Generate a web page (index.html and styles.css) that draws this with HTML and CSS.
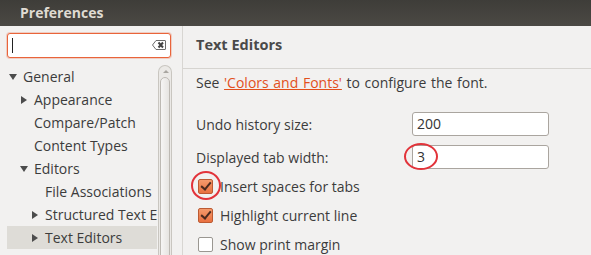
FILE: index.html
```html
<!DOCTYPE html>
<html>
<head>
<meta charset="utf-8">
<link rel="stylesheet" href="styles.css">
</head>
<body>
<div class="window">
  <div class="titlebar">Preferences</div>
  <div class="content">
    <div class="left">
      <div class="search">
        <span class="caret"></span>
        <svg class="clear" width="14" height="10" viewBox="0 0 14 10">
          <path d="M4 0.5 H13 a0.5 0.5 0 0 1 0.5 0.5 V9 a0.5 0.5 0 0 1 -0.5 0.5 H4 L0.5 5 Z" fill="#fff" stroke="#6b6b6b" stroke-width="1"/>
          <path d="M6.5 2.5 L11 7.5 M11 2.5 L6.5 7.5" stroke="#444" stroke-width="2"/>
        </svg>
      </div>
      <div class="treewrap">
        <ul class="tree">
          <li class="row lvl0"><span class="tw open"></span>General</li>
          <li class="row lvl1"><span class="tw closed"></span>Appearance</li>
          <li class="row lvl1"><span class="tw"></span>Compare/Patch</li>
          <li class="row lvl1"><span class="tw"></span>Content Types</li>
          <li class="row lvl1"><span class="tw open"></span>Editors</li>
          <li class="row lvl2"><span class="tw"></span>File Associations</li>
          <li class="row lvl2"><span class="tw closed"></span>Structured Text Editors</li>
          <li class="row lvl2 sel"><span class="tw closed"></span>Text Editors</li>
        </ul>
        <div class="scrollbar">
          <div class="sb-up"></div>
          <div class="sb-thumb"></div>
        </div>
      </div>
    </div>
    <div class="divider"></div>
    <div class="right">
      <div class="heading">Text Editors</div>
      <div class="page">
        <div class="info">See <a class="link">'Colors and Fonts'</a> to configure the font.</div>
        <div class="field first"><span class="label">Undo history size:</span><div class="input">200</div></div>
        <div class="field"><span class="label">Displayed tab width:</span><div class="input"><span class="ring ring-val"></span>3</div></div>
        <div class="check first"><span class="box on"><span class="ring ring-box"></span></span>Insert spaces for tabs</div>
        <div class="check"><span class="box on"></span>Highlight current line</div>
        <div class="check"><span class="box"></span>Show print margin</div>
      </div>
    </div>
  </div>
</div>
</body>
</html>
```
FILE: styles.css
```css
* { box-sizing: border-box; }
html, body { margin: 0; padding: 0; }
body {
  width: 591px;
  height: 255px;
  overflow: hidden;
  background: #f2f1f0;
  font-family: "Open Sans", "Noto Sans", sans-serif;
  font-size: 14px;
  color: #3c3c3c;
}
.window { display: flex; flex-direction: column; height: 255px; overflow: hidden; }
.titlebar {
  height: 26px;
  background: linear-gradient(#3e3d39, #4b4944);
  color: #dfdbd2;
  font-weight: bold;
  font-size: 14px;
  padding-left: 20px;
  line-height: 25px;
  flex: none;
}
.content { flex: 1; display: flex; min-height: 0; }
.left { width: 181px; padding: 7px 0 0 7px; display: flex; flex-direction: column; }
.search {
  position: relative;
  width: 164px;
  height: 25px;
  flex: none;
  border: 1px solid #e9643a;
  border-radius: 3px;
  background: #fff;
  box-shadow: 0 0 0 1px rgba(233,100,58,0.25);
}
.caret { position: absolute; left: 4px; top: 4px; width: 1px; height: 15px; background: #222; }
.clear { position: absolute; right: 4px; top: 6px; }
.treewrap { flex: 1; display: flex; margin-top: 7px; min-height: 0; }
.tree { list-style: none; margin: 0; padding: 0; width: 150px; overflow: hidden; white-space: nowrap; }
.row { height: 23px; line-height: 23px; display: flex; align-items: center; }
.lvl0 { padding-left: 0; }
.lvl1 { padding-left: 11px; }
.lvl2 { padding-left: 22px; }
.sel { background: #dedcd7; }
.tw { width: 16px; height: 23px; flex: none; position: relative; }
.tw.open::before {
  content: ""; position: absolute; left: 2px; top: 9px;
  border-left: 4px solid transparent; border-right: 4px solid transparent; border-top: 6px solid #4c4c4c;
}
.tw.closed::before {
  content: ""; position: absolute; left: 3px; top: 8px;
  border-top: 4px solid transparent; border-bottom: 4px solid transparent; border-left: 6px solid #4c4c4c;
}
.scrollbar {
  width: 14px; margin-left: 1px;
  border: 1px solid #c9c6c0; border-bottom: none;
  border-radius: 7px 7px 0 0;
  background: #ebe9e6;
  padding: 1px;
  overflow: hidden;
}
.sb-up { height: 10px; position: relative; }
.sb-up::before {
  content: ""; position: absolute; left: 3px; top: 3px;
  border-left: 3px solid transparent; border-right: 3px solid transparent; border-bottom: 3px solid #a9a6a0;
}
.sb-thumb {
  height: 200px; border: 1px solid #bdb9b3; border-radius: 6px 6px 0 0;
  background: linear-gradient(90deg, #f6f5f4, #e6e4e1);
}
.divider { width: 1px; background: #d8d6d2; margin-left: 1px; }
.right { flex: 1; display: flex; flex-direction: column; }
.heading {
  height: 43px; line-height: 37px; padding-left: 13px;
  font-weight: bold; color: #4a4a4a; font-size: 14.5px;
  border-bottom: 1px solid #d6d4d0;
}
.page { padding-left: 13px; }
.info { margin-top: 4px; height: 20px; line-height: 20px; word-spacing: 1px; }
.link { color: #e2501c; text-decoration: underline; text-decoration-color: #e2501c; }
.field { display: flex; align-items: center; height: 24px; margin-top: 9px; }
.field.first { margin-top: 19px; }
.label { width: 216px; }
.input {
  position: relative;
  width: 137px; height: 24px;
  border: 1px solid #aaa59f; border-radius: 3px;
  background: #fff; padding-left: 4px; line-height: 22px; color: #333;
}
.check { display: flex; align-items: center; height: 20px; margin-top: 9px; position: relative; }
.check.first { margin-top: 7px; }
.box {
  position: relative;
  width: 15px; height: 15px; margin: 0 7px 0 2px;
  border: 1px solid #9a9791; border-radius: 2px; background: #fff;
}
.box.on {
  background: linear-gradient(#f49a6c, #e9703f);
  border-color: #bc5a32;
}
.box.on::after {
  content: ""; position: absolute; left: 4px; top: 0px;
  width: 4px; height: 8px;
  border-right: 2px solid #4a2a1e; border-bottom: 2px solid #4a2a1e;
  transform: rotate(40deg);
}
.ring { position: absolute; border: 2.5px solid #e2333a; border-radius: 50%; }
.ring-box { left: -8px; top: -9px; width: 30px; height: 29px; }
.ring-val { left: -9px; top: -3px; width: 34px; height: 27px; }
```
